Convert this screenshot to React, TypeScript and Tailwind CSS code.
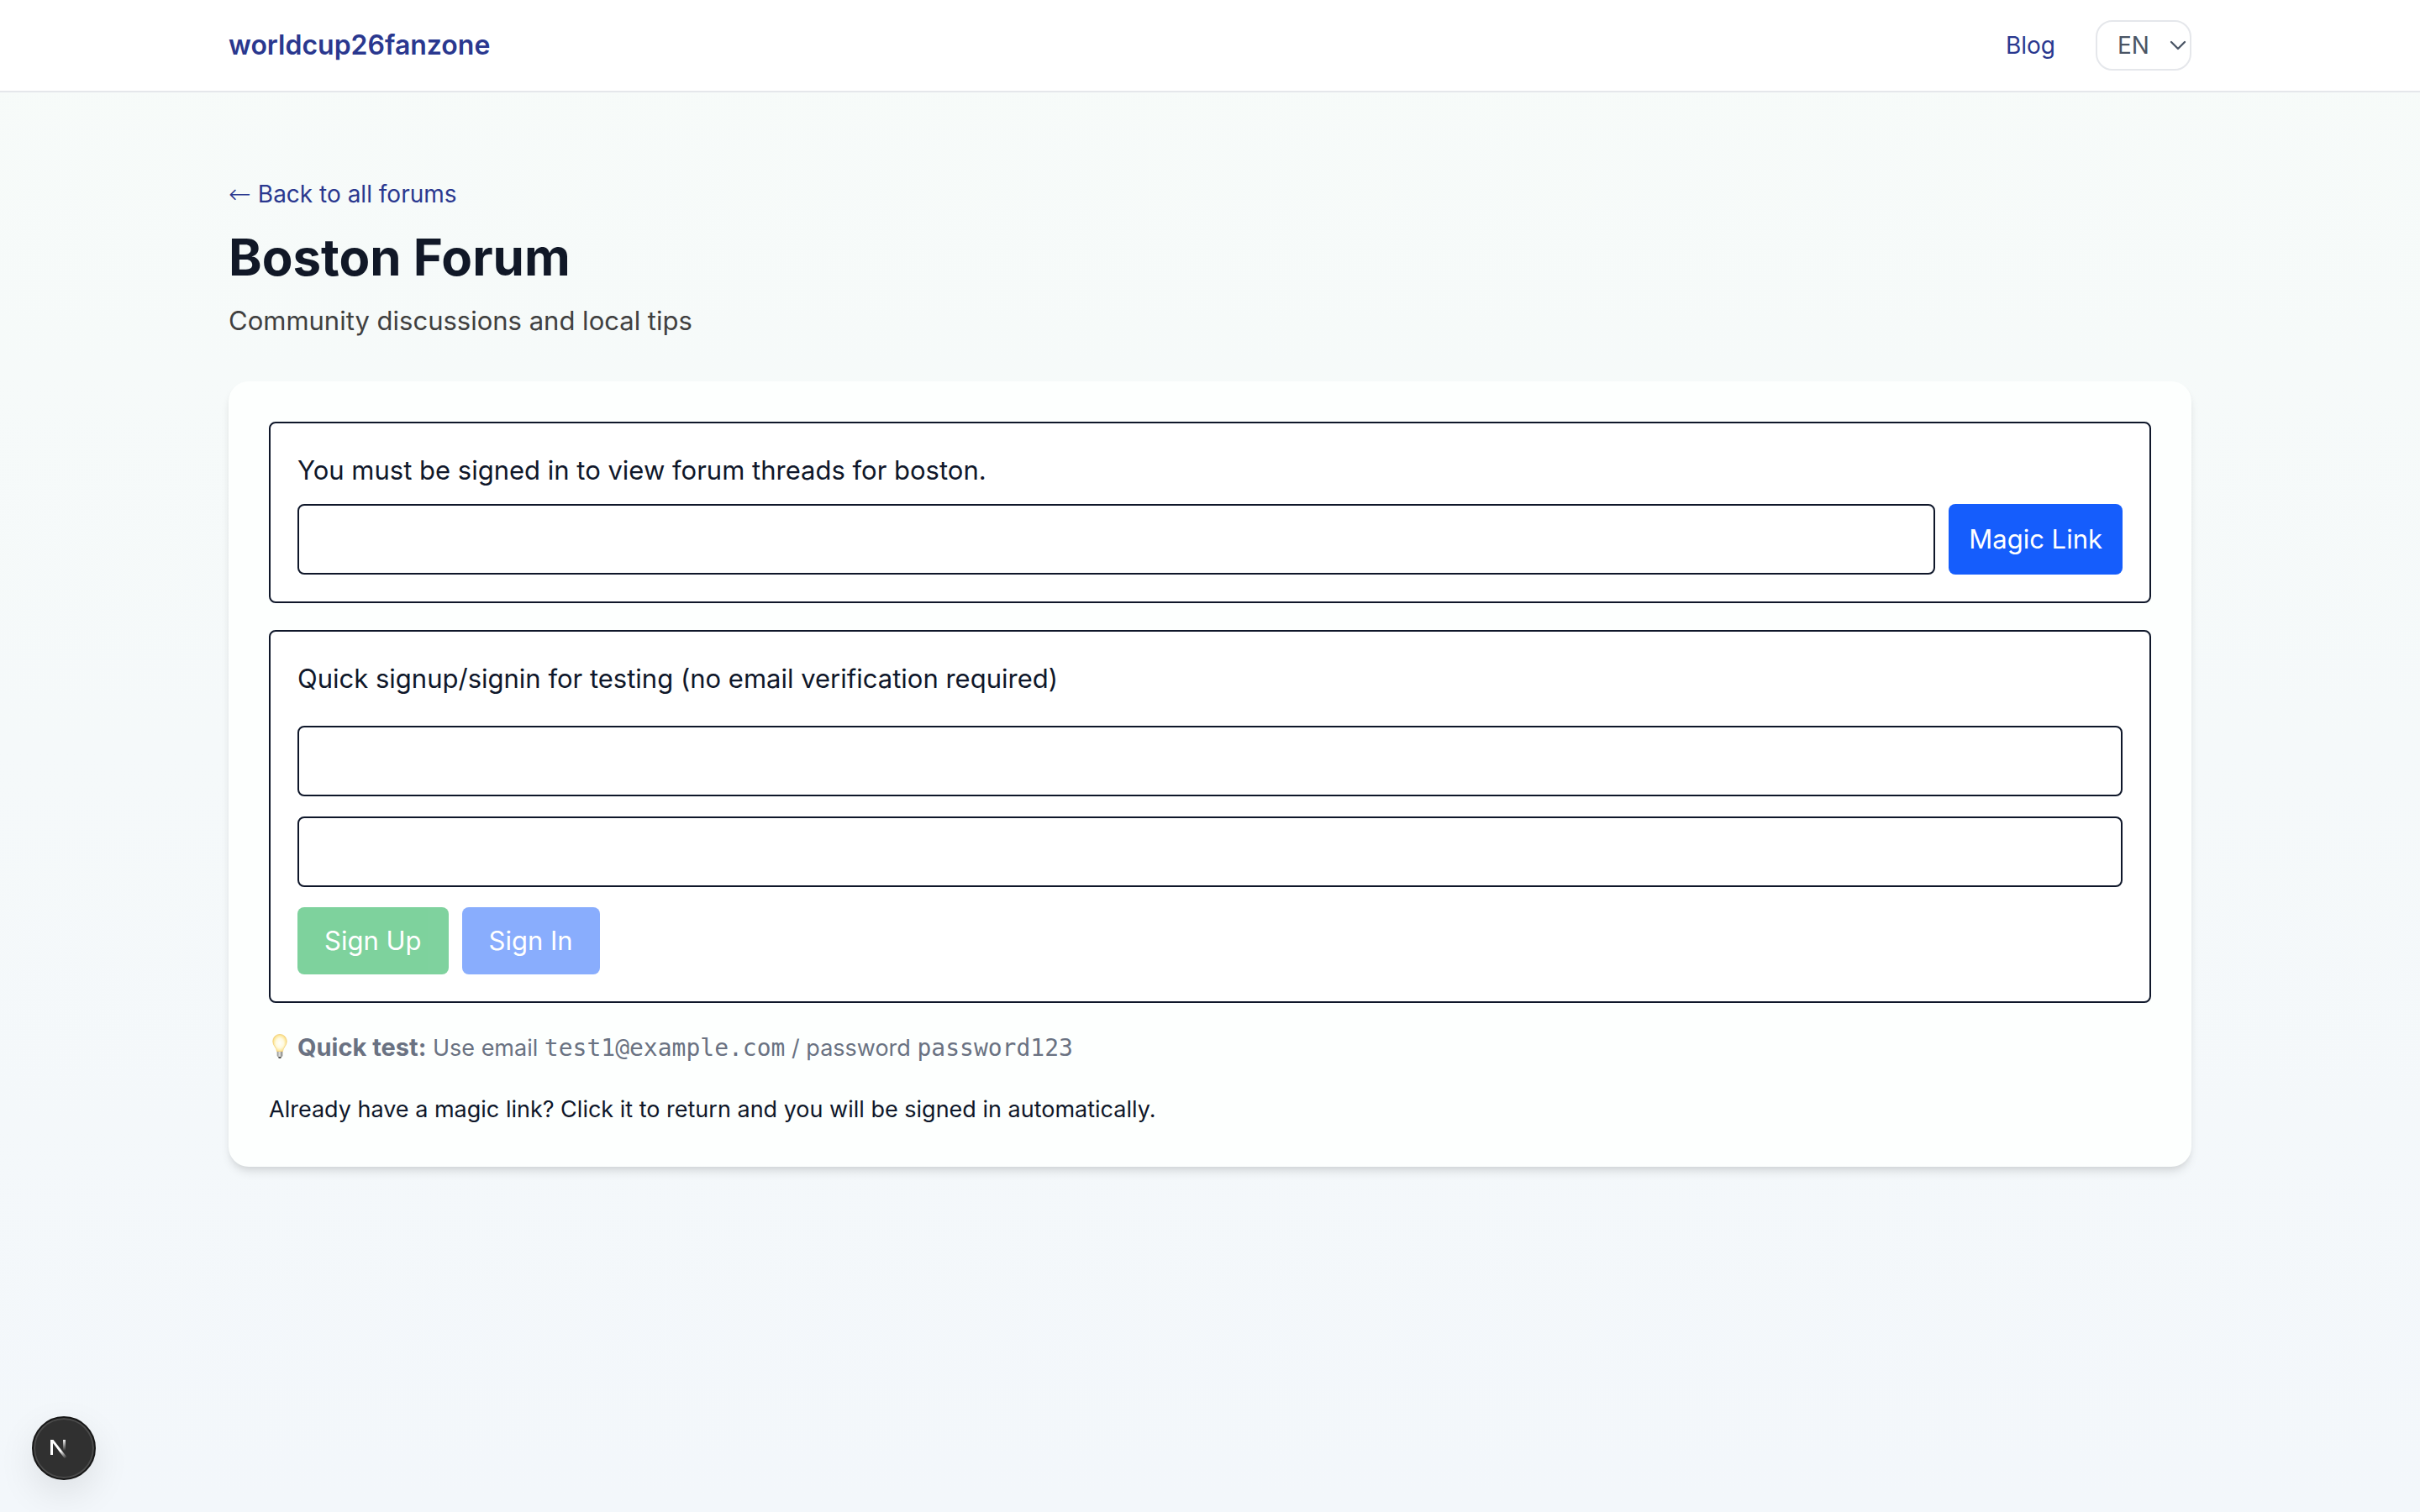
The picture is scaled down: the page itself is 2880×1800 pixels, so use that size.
import { ChevronDown } from "lucide-react";

const inputClass =
  "min-w-0 rounded-lg border-2 border-[#0f172a] bg-white px-6 py-4 text-[31px] leading-[48px]";

function BulbIcon() {
  return (
    <svg viewBox="5 3 28 30" className="mr-1.5 inline-block h-[30px] w-7 align-[-4px]" aria-hidden="true">
      <defs>
        <radialGradient id="glass" cx="0.5" cy="0.5" r="0.55">
          <stop offset="0" stopColor="#fffffb" />
          <stop offset="0.5" stopColor="#fffae0" />
          <stop offset="0.8" stopColor="#fde9a0" />
          <stop offset="1" stopColor="#f3cf70" />
        </radialGradient>
        <linearGradient id="cap" x1="0" x2="1" y1="0" y2="0">
          <stop offset="0" stopColor="#8a8a86" />
          <stop offset="0.45" stopColor="#e4e4e0" />
          <stop offset="1" stopColor="#777773" />
        </linearGradient>
      </defs>
      <path
        d="M18 3.500c-5 0-8.200 3.700-8.200 8.500 0 4.800 4.300 6.800 4.900 12h6.600c.6-5.200 4.900-7.200 4.900-12 0-4.800-3.200-8.500-8.200-8.500z"
        fill="url(#glass)"
        stroke="#f2cf78"
        strokeWidth="0.800"
      />
      <path d="M14.700 24h6.600v4.500c0 1-.8 1.800-1.800 1.800h-3c-1 0-1.800-.8-1.800-1.800z" fill="url(#cap)" />
      <path d="M16 30.300h4l-.8 1.600h-2.400z" fill="#3d3d3b" />
    </svg>
  );
}

function Header() {
  return (
    <header className="border-b-2 border-gray-200 bg-white">
      <div className="mx-auto flex max-w-[2400px] items-center justify-between px-8 py-6">
        <a href="#home" className="text-[32px] leading-[48px] font-semibold text-[#2a388f]">
          worldcup26fanzone
        </a>
        <nav className="flex items-center gap-12">
          <a href="#blog" className="text-[28px] leading-10 text-[#2a388f]">
            Blog
          </a>
          <div className="relative">
            <select
              aria-label="Language"
              defaultValue="en"
              className="block h-[60px] w-[114px] appearance-none rounded-[20px] border-2 border-gray-200 bg-white pl-6 text-[28px] leading-10 text-[#4a5565]"
            >
              <option value="en">EN</option>
              <option value="es">ES</option>
              <option value="fr">FR</option>
            </select>
            <ChevronDown
              className="pointer-events-none absolute top-[14px] right-0 size-8 text-[#4a5565]"
              strokeWidth={1.75}
            />
          </div>
        </nav>
      </div>
    </header>
  );
}

function DevBadge() {
  return (
    <button
      type="button"
      aria-label="Open Next.js Dev Tools"
      className="fixed bottom-[38px] left-[38px] flex size-[76px] items-center justify-center rounded-full border-2 border-[#171717] bg-[#303030] shadow-[inset_0_0_0_2px_#4a4a4a,0_16px_48px_-4px_rgba(0,0,0,0.12)]"
    >
      <svg viewBox="0 0 40 40" className="size-10" fill="none" aria-hidden="true">
        <defs>
          <linearGradient id="diag" x1="18" y1="22" x2="24" y2="31" gradientUnits="userSpaceOnUse">
            <stop stopColor="#fff" />
            <stop offset="1" stopColor="#fff" stopOpacity="0" />
          </linearGradient>
          <linearGradient id="stem" x1="0" y1="9" x2="0" y2="23" gradientUnits="userSpaceOnUse">
            <stop stopColor="#fff" />
            <stop offset="1" stopColor="#fff" stopOpacity="0" />
          </linearGradient>
        </defs>
        <path d="M5.500 28V10" stroke="#fff" strokeWidth="3" />
        <path d="M4 10h3.500L23.500 30.500l-2.500 2z" fill="url(#diag)" />
        <path d="M20.500 10v13" stroke="url(#stem)" strokeWidth="3" />
      </svg>
    </button>
  );
}

export default function App() {
  return (
    <div className="min-h-screen bg-linear-to-b from-[#f7fbf9] to-[#f3f7fb] font-['Inter',sans-serif] text-[31px] leading-[48px] text-[#0f172a]">
      <Header />
      <main className="mx-auto max-w-[2400px] px-8 py-24">
        <a href="#forums" className="mb-3.5 flex w-fit items-center gap-2 text-[28px] leading-[50px] text-[#2a388f]">
          <span className="font-['DejaVu_Sans',sans-serif] text-[32px] font-extralight">←</span>
          Back to all forums
        </a>
        <h1 className="mb-4 text-[60px] leading-[72px] font-bold text-[#111827]">Boston Forum</h1>
        <p className="mb-12 text-[#404040]">Community discussions and local tips</p>

        <div className="flex flex-col gap-8 rounded-3xl bg-[#fdfffe] p-12 shadow-[0_8px_12px_-2px_rgba(0,0,0,0.1),0_4px_8px_-4px_rgba(0,0,0,0.1)]">
          <form className="rounded-lg border-2 border-[#0f172a] bg-white p-8">
            <p className="mb-4">You must be signed in to view forum threads for boston.</p>
            <div className="flex gap-4">
              <input type="email" aria-label="Email for magic link" className={`${inputClass} flex-1`} />
              <button type="button" className="rounded-lg bg-[#155dfc] px-6 text-white">
                Magic Link
              </button>
            </div>
          </form>

          <form className="rounded-lg border-2 border-[#0f172a] bg-white p-8">
            <p className="mb-8">Quick signup/signin for testing (no email verification required)</p>
            <div className="flex flex-col gap-6">
              <input type="email" aria-label="Email" className={inputClass} />
              <input type="password" aria-label="Password" className={inputClass} />
              <div className="flex gap-4">
                <button type="button" disabled className="rounded-lg bg-[#00a63e] px-8 py-4 text-white opacity-50">
                  Sign Up
                </button>
                <button type="button" disabled className="rounded-lg bg-[#155dfc] px-8 py-4 text-white opacity-50">
                  Sign In
                </button>
              </div>
            </div>
          </form>

          <p className="text-[27px] leading-[42px] text-[#6a7282]">
            <BulbIcon />
            <strong className="text-[29px] font-bold">Quick test:</strong> Use email{" "}
            <code className="font-['DejaVu_Sans_Mono',monospace] text-[28px]">test1@example.com</code> / password{" "}
            <code className="font-['DejaVu_Sans_Mono',monospace] text-[28px]">password123</code>
          </p>
          <p className="text-[27px] leading-10">
            Already have a magic link? Click it to return and you will be signed in automatically.
          </p>
        </div>
      </main>
      <DevBadge />
    </div>
  );
}
